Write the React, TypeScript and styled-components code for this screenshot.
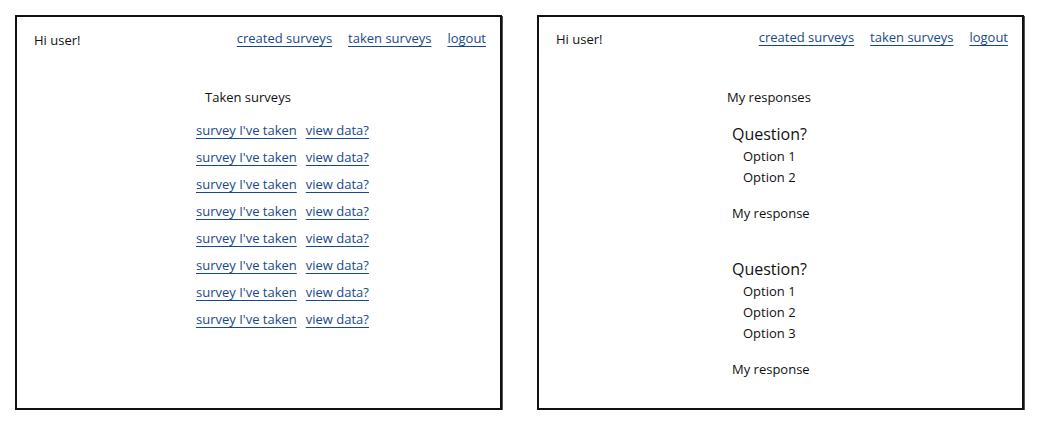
import styled, { createGlobalStyle } from 'styled-components'

const GlobalStyle = createGlobalStyle`
  body {
    margin: 0;
    background: #fff;
    font-family: "Open Sans", "Noto Sans", sans-serif;
    color: #111;
  }
`

const Page = styled.div`
  display: flex;
  gap: 35px;
  padding: 15px 0 0 15px;
`

const Frame = styled.div`
  width: 483px;
  height: 391px;
  border: 2px solid #111;
  box-shadow: 1px 1px 0 #555;
  display: flex;
  flex-direction: column;
`

const Header = styled.div`
  display: flex;
  align-items: center;
  justify-content: space-between;
  padding: 13px 14px 0 17px;
  height: 20px;
  font-size: 13px;
`

const Nav = styled.nav`
  display: flex;
  gap: 16px;
  margin-top: -4px;
`

const Link = styled.a`
  color: #18498a;
  text-decoration: underline;
  text-underline-offset: 3px;
  text-decoration-thickness: 1px;
  font-size: 13px;
  cursor: pointer;
`

const Content = styled.div<{ $left: number; $top: number }>`
  display: flex;
  flex-direction: column;
  padding-left: ${p => p.$left}px;
  margin-top: ${p => p.$top}px;
  font-size: 13px;
`

const Title = styled.div<{ $indent: number; $after: number }>`
  margin-left: ${p => p.$indent}px;
  height: 20px;
  line-height: 20px;
  margin-bottom: ${p => p.$after}px;
`

const Row = styled.div`
  display: flex;
  gap: 9px;
  height: 27px;
  line-height: 20px;
`

const Question = styled.div`
  font-size: 16px;
  margin-left: 5px;
  height: 24px;
  line-height: 24px;
`

const Option = styled.div`
  margin-left: 16px;
  height: 21px;
  line-height: 21px;
`

const Response = styled.div`
  margin-left: 5px;
  margin-top: 15px;
  height: 20px;
  line-height: 20px;
  margin-bottom: 34px;
`

const surveys = Array.from({ length: 8 })

const questions = [
  ['Option 1', 'Option 2'],
  ['Option 1', 'Option 2', 'Option 3'],
]

const TopBar = () => (
  <Header>
    <span>Hi user!</span>
    <Nav>
      <Link>created surveys</Link>
      <Link>taken surveys</Link>
      <Link>logout</Link>
    </Nav>
  </Header>
)

export default function App() {
  return (
    <Page>
      <GlobalStyle />
      <Frame>
        <TopBar />
        <Content $left={179} $top={37}>
          <Title $indent={9} $after={13}>Taken surveys</Title>
          {surveys.map((_, i) => (
            <Row key={i}>
              <Link>survey I've taken</Link>
              <Link>view data?</Link>
            </Row>
          ))}
        </Content>
      </Frame>
      <Frame>
        <TopBar />
        <Content $left={188} $top={39}>
          <Title $indent={0} $after={15}>My responses</Title>
          {questions.map((opts, i) => (
            <div key={i}>
              <Question>Question?</Question>
              {opts.map(o => <Option key={o}>{o}</Option>)}
              <Response>My response</Response>
            </div>
          ))}
        </Content>
      </Frame>
    </Page>
  )
}
